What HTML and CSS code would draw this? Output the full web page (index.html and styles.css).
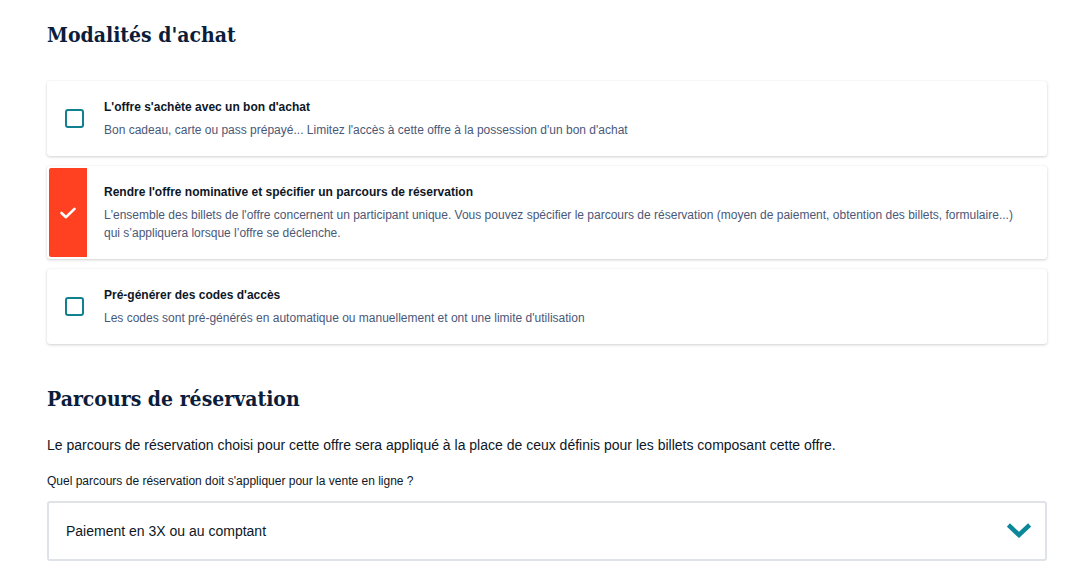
FILE: index.html
```html
<!DOCTYPE html>
<html lang="fr">
<head>
<meta charset="utf-8">
<link rel="stylesheet" href="styles.css">
</head>
<body>
<main class="page">
  <h2 class="section-title first">Modalités d'achat</h2>
  <div class="options">
    <div class="option">
      <div class="mark"><span class="box"></span></div>
      <div class="text">
        <div class="opt-title">L'offre s'achète avec un bon d'achat</div>
        <div class="opt-desc">Bon cadeau, carte ou pass prépayé... Limitez l'accès à cette offre à la possession d'un bon d'achat</div>
      </div>
    </div>
    <div class="option checked">
      <div class="mark"><span class="tick"><svg width="18" height="14" viewBox="0 0 18 14"><path d="M2.5 7 L7 11.2 L15.5 2.8" fill="none" stroke="#fff" stroke-width="2.6" stroke-linecap="round" stroke-linejoin="round"/></svg></span></div>
      <div class="text">
        <div class="opt-title">Rendre l'offre nominative et spécifier un parcours de réservation</div>
        <div class="opt-desc">L'ensemble des billets de l'offre concernent un participant unique. Vous pouvez spécifier le parcours de réservation (moyen de paiement, obtention des billets, formulaire...) qui s’appliquera lorsque l’offre se déclenche.</div>
      </div>
    </div>
    <div class="option">
      <div class="mark"><span class="box"></span></div>
      <div class="text">
        <div class="opt-title">Pré-générer des codes d'accès</div>
        <div class="opt-desc">Les codes sont pré-générés en automatique ou manuellement et ont une limite d'utilisation</div>
      </div>
    </div>
  </div>

  <h2 class="section-title second">Parcours de réservation</h2>
  <p class="intro">Le parcours de réservation choisi pour cette offre sera appliqué à la place de ceux définis pour les billets composant cette offre.</p>
  <div class="label">Quel parcours de réservation doit s'appliquer pour la vente en ligne ?</div>
  <div class="select">
    <span class="select-value">Paiement en 3X ou au comptant</span>
    <svg class="chev" width="24" height="16" viewBox="0 0 24 16"><path d="M3 3.5 L12 12 L21 3.5" fill="none" stroke="#0a8799" stroke-width="4.5" stroke-linecap="square"/></svg>
  </div>
</main>
</body>
</html>
```

FILE: styles.css
```css
* { box-sizing: border-box; }
html, body { margin: 0; padding: 0; background: #fff; }
body { font-family: "Liberation Sans", Arial, sans-serif; color: #0d1b2e; }

.page {
  width: 1000px;
  margin-left: 47px;
  padding-top: 20px;
}

.section-title {
  font-family: "DejaVu Serif", "Liberation Serif", serif;
  font-weight: bold;
  font-stretch: condensed;
  font-size: 21px;
  line-height: 30px;
  color: #0b1d3a;
  margin: 0;
}
.section-title.first { margin-bottom: 31px; }
.section-title.second { margin-top: 40px; }

.options {
  display: flex;
  flex-direction: column;
  gap: 10px;
}

.option {
  display: flex;
  background: #fff;
  border-radius: 3px;
  box-shadow: 0 1px 3px rgba(0, 0, 0, 0.18), 0 0 1px rgba(0, 0, 0, 0.08);
  min-height: 75px;
}

.mark {
  width: 57px;
  flex: none;
  display: flex;
  align-items: center;
  padding-left: 18px;
}
.box {
  width: 19px;
  height: 19px;
  border: 2px solid #12808f;
  border-radius: 3px;
}
.option.checked .mark {
  padding: 2px 17px 2px 2px;
  align-items: stretch;
}
.tick {
  flex: 1;
  background: #ff4122;
  border-radius: 2px 0 0 2px;
  display: flex;
  align-items: center;
  justify-content: center;
}

.text {
  padding: 17px 20px 17px 0;
}
.opt-title {
  font-size: 12px;
  font-weight: bold;
  line-height: 18px;
  color: #0d1726;
  margin-bottom: 5px;
}
.opt-desc {
  font-size: 12px;
  line-height: 18px;
  color: #4a5878;
}

.intro {
  font-size: 14px;
  line-height: 20px;
  margin: 21px 0 0;
  color: #0d1726;
}
.label {
  font-size: 12px;
  line-height: 16px;
  margin-top: 18px;
  color: #0d1726;
}
.select {
  margin-top: 12px;
  height: 60px;
  border: 2px solid #dfe2e6;
  border-radius: 3px;
  display: flex;
  align-items: center;
  justify-content: space-between;
  padding: 0 14px 0 17px;
}
.select-value {
  font-size: 14px;
  color: #0d1726;
}
.chev { display: block; margin-top: -1px; }
```
